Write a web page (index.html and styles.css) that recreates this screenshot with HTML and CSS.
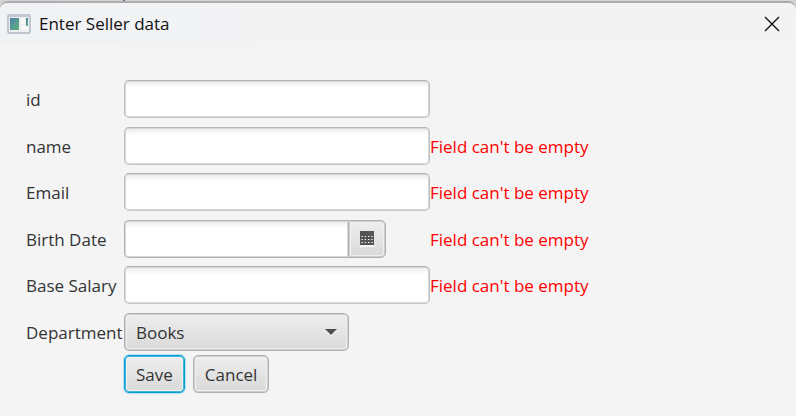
FILE: index.html
```html
<!DOCTYPE html>
<html lang="en">
<head>
<meta charset="utf-8">
<title>Enter Seller data</title>
<link rel="stylesheet" href="styles.css">
</head>
<body>
<div class="backdrop">
<main class="window">
  <header class="titlebar">
    <svg class="app-icon" width="24" height="20" viewBox="0 0 24 20" aria-hidden="true">
      <defs><linearGradient id="pane" x1="0" y1="0" x2="1" y2="1"><stop offset="0" stop-color="#4a80ad"/><stop offset="1" stop-color="#62b377"/></linearGradient></defs>
      <rect x="1" y="1" width="22" height="18" rx="1" fill="#eceef2" stroke="#b0b5c1" stroke-width="1.4"/>
      <rect x="1" y="1" width="22" height="2" fill="#c3c8d2"/>
      <rect x="3" y="4" width="9" height="12" fill="url(#pane)"/>
      <rect x="14" y="4" width="4" height="6" fill="#f8f8f8"/>
      <rect x="14" y="11" width="7" height="5" fill="#f8f8f8"/>
      <rect x="19" y="4" width="2" height="8" fill="url(#pane)"/>
    </svg>
    <h1 class="title">Enter Seller data</h1>
    <button class="close" type="button" aria-label="Close">
      <svg width="16" height="16" viewBox="0 0 16 16"><path d="M1 1L15 15M15 1L1 15" stroke="#111" stroke-width="1.4" fill="none"/></svg>
    </button>
  </header>
  <form class="form">
    <label class="label" for="id">id</label>
    <input class="field" id="id" type="text">

    <label class="label" for="name">name</label>
    <input class="field" id="name" type="text">
    <span class="error">Field can't be empty</span>

    <label class="label" for="email">Email</label>
    <input class="field" id="email" type="text">
    <span class="error">Field can't be empty</span>

    <label class="label" for="birth">Birth Date</label>
    <div class="date">
      <input class="field date-field" id="birth" type="text">
      <button class="button date-button" type="button" aria-label="Choose date">
        <svg width="14" height="16" viewBox="0 0 14 16">
          <path d="M0 14h14v2H0z" fill="#f8f8f8"/>
          <path d="M0 0h14v14H0z" fill="#555"/>
          <path d="M1 5.5h12M1 8.5h12M1 11.5h12" stroke="#f4f4f4" stroke-width="1.2" stroke-dasharray="1.4 1.9" stroke-dashoffset="-.4"/>
        </svg>
      </button>
    </div>
    <span class="error">Field can't be empty</span>

    <label class="label" for="salary">Base Salary</label>
    <input class="field" id="salary" type="text">
    <span class="error">Field can't be empty</span>

    <label class="label" for="department">Department</label>
    <div class="combo">
      <select class="button select" id="department"><option>Books</option></select>
      <svg class="arrow" width="12" height="7" viewBox="0 0 12 7"><path d="M0 1h12L6 7z" fill="#fff"/><path d="M0 0h12L6 6z" fill="#4d4d4d"/></svg>
    </div>

    <div class="actions">
      <button class="button primary" type="submit">Save</button>
      <button class="button" type="button">Cancel</button>
    </div>
  </form>
</main>
</div>
</body>
</html>
```
FILE: styles.css
```css
* { box-sizing: border-box; }

body {
  margin: 0;
  font: 17px/24px "Open Sans", "Noto Sans", sans-serif;
  color: #333;
  background: #f4f4f4;
}

.backdrop {
  min-height: 100vh;
  padding-top: 1px;
  background: linear-gradient(90deg, #8a5a55 1px, #3c82c4 1px) 123px 0 / 2px 3px no-repeat #d4d4d4;
}

.window {
  min-height: calc(100vh - 1px);
  border-top: 2px solid #acacac;
  border-radius: 8px 8px 0 0;
  background: #f4f4f4;
}

.titlebar {
  display: flex;
  align-items: center;
  gap: 8px;
  height: 41px;
  padding: 0 16px 0 7px;
  border-radius: 8px 8px 0 0;
  background: linear-gradient(90deg, #f0f2f5, #f3f3f3 50%);
}

.title {
  flex: 1;
  margin: 0;
  font-size: 17px;
  font-weight: 400;
  color: #111;
}

.close {
  display: flex;
  padding: 0;
  border: 0;
  background: none;
}

.form {
  display: grid;
  grid-template-columns: 98px 306px 1fr;
  grid-template-rows: 47px 46px 47px 46px 47px 42px 38px;
  align-items: start;
  padding: 36px 26px 20px;
}

.label, .error { line-height: 40px; white-space: nowrap; }

.label { grid-column: 1; }

.error { grid-column: 3; color: #f00; }

.field, .button {
  height: 38px;
  border: 1px solid #b7b7b7;
  border-radius: 5px;
  font: inherit;
  color: #333;
}

.field {
  width: 100%;
  padding: 0 11px;
  border-color: #b4b4b4 #bfbfbf #c6c6c6;
  background: linear-gradient(#eaeaea, #fff 7px);
  box-shadow: inset 0 0 0 1px #d8d8d8;
  outline: 0;
}

.button {
  padding: 2px 11px 0;
  border-color: #b2b2b2;
  background: linear-gradient(#eee, #d9d9d9);
  box-shadow: inset 0 0 0 1px #cdcdcd, inset 0 0 0 2px #f0f0f0;
}

.date { display: flex; width: 262px; }

.date-field {
  flex: 1;
  min-width: 0;
  border-color: #b2b2b2;
  border-right: 0;
  border-radius: 5px 0 0 5px;
}

.date-button {
  display: flex;
  align-items: center;
  justify-content: center;
  width: 38px;
  padding: 0;
  border-radius: 0 5px 5px 0;
}

.combo { position: relative; width: 225px; }

.select { width: 100%; appearance: none; }

.arrow {
  position: absolute;
  top: 16px;
  right: 12px;
  pointer-events: none;
}

.actions { display: flex; grid-column: 2; gap: 8px; }

.primary {
  border-color: #039ed3;
  box-shadow: inset 0 0 0 1px #42b5dd, inset 0 0 0 2px #f0f0f0, 0 0 1px 1px #b5dff0;
}
```
